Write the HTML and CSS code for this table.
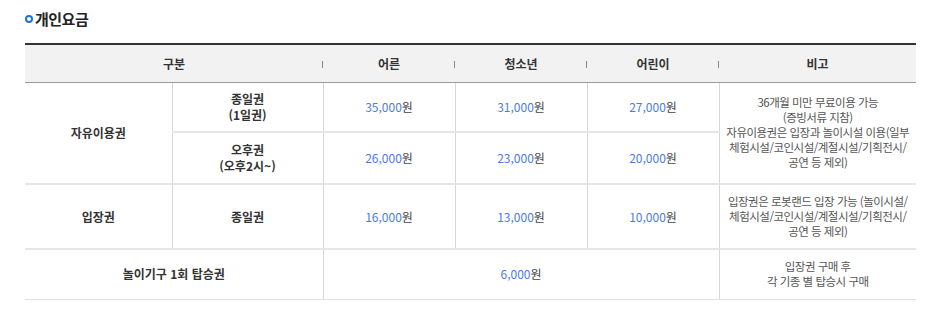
FILE: index.html
```html
<!DOCTYPE html>
<html lang="ko">
<head>
<meta charset="utf-8">
<link rel="stylesheet" href="styles.css">
</head>
<body>
<div class="wrap">
  <h3 class="title"><span class="dot"></span>개인요금</h3>
  <table class="fee">
    <colgroup>
      <col class="c1"><col class="c2"><col class="c3"><col class="c4"><col class="c5"><col class="c6">
    </colgroup>
    <thead>
      <tr>
        <th colspan="2" class="sep">구분</th>
        <th class="sep">어른</th>
        <th class="sep">청소년</th>
        <th class="sep">어린이</th>
        <th>비고</th>
      </tr>
    </thead>
    <tbody>
      <tr class="r1">
        <td rowspan="2" class="b">자유이용권</td>
        <td class="b">종일권<br>(1일권)</td>
        <td><span class="num">35,000</span>원</td>
        <td><span class="num">31,000</span>원</td>
        <td><span class="num">27,000</span>원</td>
        <td rowspan="2" class="note">36개월 미만 무료이용 가능<br>(증빙서류 지참)<br>자유이용권은 입장과 놀이시설 이용(일부<br>체험시설/코인시설/계절시설/기획전시/<br>공연 등 제외)</td>
      </tr>
      <tr class="r2">
        <td class="b">오후권<br>(오후2시~)</td>
        <td><span class="num">26,000</span>원</td>
        <td><span class="num">23,000</span>원</td>
        <td><span class="num">20,000</span>원</td>
      </tr>
      <tr class="r3">
        <td class="b">입장권</td>
        <td class="b">종일권</td>
        <td><span class="num">16,000</span>원</td>
        <td><span class="num">13,000</span>원</td>
        <td><span class="num">10,000</span>원</td>
        <td class="note">입장권은 로봇랜드 입장 가능 (놀이시설/<br>체험시설/코인시설/계절시설/기획전시/<br>공연 등 제외)</td>
      </tr>
      <tr class="r4">
        <td colspan="2" class="b">놀이기구 1회 탑승권</td>
        <td colspan="3"><span class="num">6,000</span>원</td>
        <td class="note">입장권 구매 후<br>각 기종 별 탑승시 구매</td>
      </tr>
    </tbody>
  </table>
</div>
</body>
</html>
```

FILE: styles.css
```css
* { box-sizing: border-box; }
html, body { margin: 0; padding: 0; background: #fff; }
body {
  font-family: "Noto Sans CJK KR", "Noto Sans", sans-serif;
  color: #333;
}
.wrap { padding: 9px 20px 0 25px; }
.title {
  margin: 0;
  display: flex;
  align-items: center;
  font-size: 15px;
  font-weight: 700;
  line-height: 20px;
  color: #222;
  letter-spacing: -0.5px;
}
.dot {
  width: 8px;
  height: 8px;
  border: 2px solid #1e73d8;
  border-radius: 50%;
  margin-right: 2px;
}
.fee {
  margin-top: 14px;
  width: 891px;
  border-collapse: collapse;
  table-layout: fixed;
  border-top: 2px solid #333;
  font-size: 12px;
}
.c1 { width: 147px; }
.c2 { width: 151px; }
.c3, .c4, .c5 { width: 132px; }
.c6 { width: 197px; }
thead th {
  background: #f2f2f2;
  height: 38px;
  font-weight: 700;
  color: #333;
  border-bottom: 1px solid #9a9a9a;
  position: relative;
  padding: 0;
}
thead th.sep::after {
  content: "";
  position: absolute;
  right: 0;
  top: 16px;
  width: 1px;
  height: 7px;
  background: #888;
}
tbody td {
  text-align: center;
  vertical-align: middle;
  border-style: solid;
  border-width: 2px 1px 0 1px;
  border-color: #e6e6e6 #d6d6d6;
  padding: 0 4px;
  line-height: 16px;
  color: #444;
}
tbody tr:first-child td { border-top: 0; }
tbody tr td:first-child { border-left: 0; }
tbody tr td:last-child { border-right: 0; }
tbody tr.r4 td { border-bottom: 1px solid #e0e0e0; }
.r1 { height: 50px; }
.r2 { height: 52px; }
.r3 { height: 65px; }
.r4 { height: 50px; }
.b { font-weight: 700; color: #333; }
.num { color: #4b7be5; }
.note {
  color: #555;
  font-size: 11.5px;
  line-height: 15px;
  letter-spacing: -0.5px;
  white-space: nowrap;
  padding: 0;
}
```
